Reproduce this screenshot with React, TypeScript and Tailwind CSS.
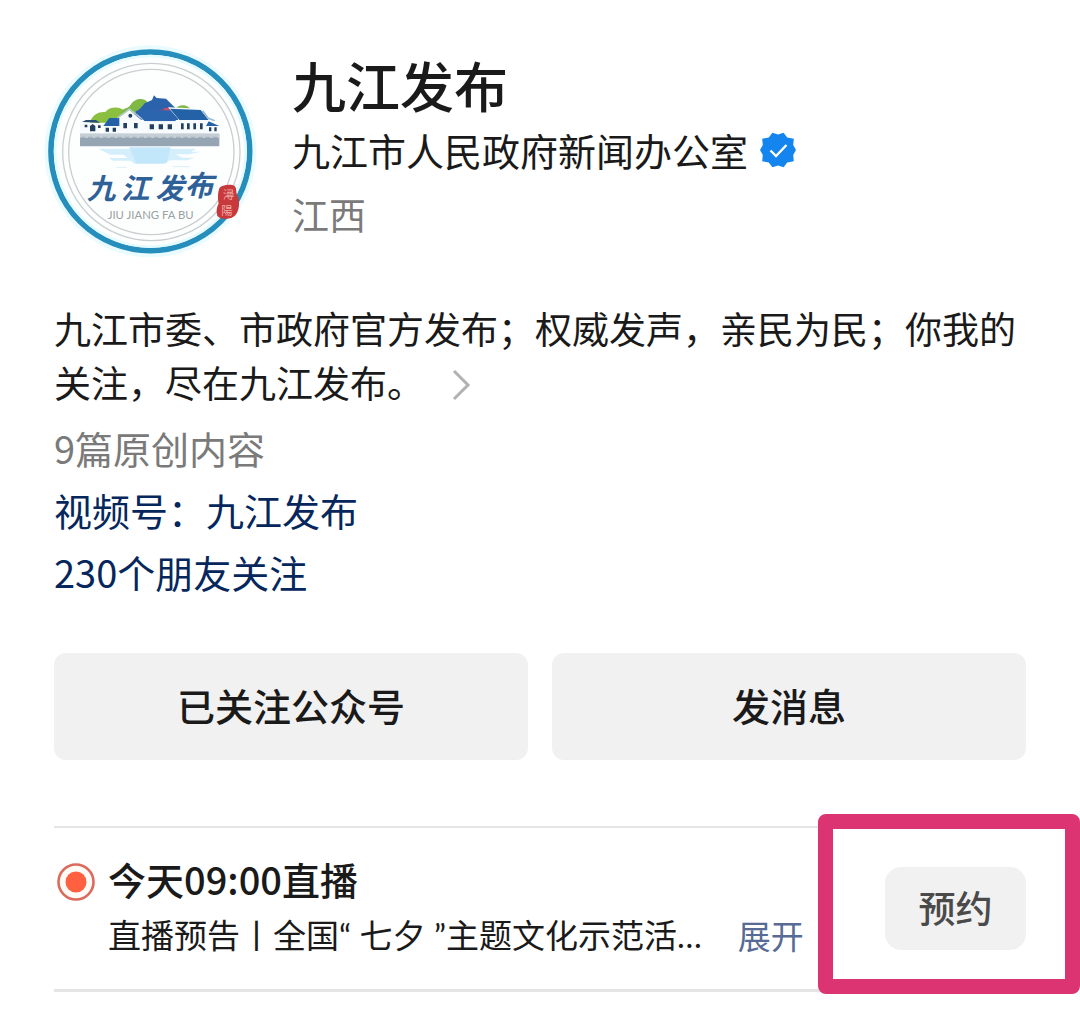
const actions = ["已关注公众号", "发消息"];

function Avatar() {
  return (
    <svg viewBox="0 0 660 660" className="size-[220px] shrink-0" role="img" aria-label="九江发布">
      <circle cx="331" cy="334" r="318" fill="#e9fbff" />
      <circle cx="331" cy="334" r="298" fill="#fdfffe" stroke="#258ebd" strokeWidth="17" />
      <circle cx="331" cy="334" r="286" fill="none" stroke="#e3faff" strokeWidth="8" />
      <circle cx="334" cy="336" r="266" fill="none" stroke="#c9cfd0" strokeWidth="4" />
      <circle cx="334" cy="336" r="248" fill="none" stroke="#c9cfd0" strokeWidth="4" />

      {/* hills */}
      <path d="M150 244c10-22 28-30 46-28 14-18 48-18 62 2l12 30H150z" fill="#8abf3f" />
      <path d="M244 212c10-8 22-8 28-18 12-22 44-22 52-6v40h-80z" fill="#7fb845" />
      <path d="M404 210c8-18 38-20 50 0z" fill="#7fb845" />

      {/* roofs and walls */}
      <path d="M262 240l40-36 12-14 22-10 6-14 8 8 28 2 22 22 14 12v30z" fill="#2a62ac" />
      <path d="M330 218l34-10 26-8-4 30-26-6z" fill="#6b5690" />
      <path d="M372 204h16v8h-14z" fill="#c2506b" />
      <path d="M120 250h60v30h-60z" fill="#f7fbfd" />
      <path d="M126 246l12-6h30l12 8z" fill="#2b4f73" />
      <path d="M190 258l18-24h36v24z" fill="#2462a8" />
      <path d="M192 258h50v26h-50z" fill="#f7fbfd" />
      <path d="M238 284v-52l30-22 36 30v44z" fill="#f7fbfd" />
      <path d="M232 234l36-27 40 31h16" fill="none" stroke="#b9cddc" strokeWidth="4" />
      <path d="M286 212l34-2 74 2 14 32H314z" fill="#2a65ae" />
      <path d="M304 244h110v40H304z" fill="#f7fbfd" />
      <path d="M384 202l30 34v48h90v-50l-20-28z" fill="#f7fbfd" />
      <path d="M390 206l92 4 24 30H418z" fill="#2462a8" />
      <path d="M488 212l16 22 20 8" fill="none" stroke="#9dbcd2" strokeWidth="5" />
      <path d="M498 258l8-14 32 14z" fill="#2462a8" />
      <path d="M502 258h32v26h-32z" fill="#f7fbfd" />
      <g fill="#23405f">
        <path d="M150 258l8-6 8 6v16h-16zM134 254h8v8h-8zM174 256h8v8h-8z" />
        <circle cx="271" cy="227" r="6" />
        <path d="M197 263h10v12h-10zM218 263h10v12h-10zM250 249h11v16h-11zM282 249h11v16h-11z" />
        <path d="M329 253h13v15h-13zM356 253h13v15h-13zM383 253h13v15h-13z" />
        <path d="M423 250h8v18h-8zM441 250h8v18h-8zM460 250h8v18h-8zM480 250h8v18h-8zM507 262h7v12h-7zM523 262h7v12h-7z" />
      </g>

      {/* embankment and water */}
      <path d="M120 281h418v38H120z" fill="#95a5b3" />
      <path d="M120 281h418v13H120z" fill="#c6ced5" />
      <path d="M122 292h414" stroke="#8d9cab" strokeWidth="2" strokeDasharray="14 8" />
      <path d="M176 326h294l-18 9h30l-34 8h-40l18 10h36l-20 8h-52l-20 11H286l-16-10h-52l-10-8h56l-14-10h-40z" fill="#d4effb" />
      <path d="M268 322h124l-12 48h-92z" fill="#c3e7fa" />
      <path d="M230 382h30M398 380h50" stroke="#dff2fa" strokeWidth="4" />

      <text y="476" fill="#2e6198" fontSize="86" fontStyle="italic" fontWeight="700" fontFamily="'Noto Sans CJK SC', sans-serif">
        <tspan x="140">九</tspan>
        <tspan x="242">江</tspan>
        <tspan x="346">发</tspan>
        <tspan x="434" y="468">布</tspan>
      </text>
      <text x="203" y="536" fill="#9aa0a4" fontSize="34" fontFamily="Lato, sans-serif">
        JIU JIANG FA BU
      </text>

      {/* seal */}
      <path d="M540 442c10-10 36-10 44-4 8 10 2 18 8 28 8 12 8 44-6 60-12 14-44 14-54 2-4-14-2-26 4-38-4-16-2-40 4-48z" fill="#c8393b" />
      <text fill="#efaca8" fontSize="34" fontFamily="'Noto Sans CJK SC', sans-serif">
        <tspan x="549" y="477">潯</tspan>
        <tspan x="544" y="525">陽</tspan>
      </text>
    </svg>
  );
}

function VerifiedBadge() {
  return (
    <svg viewBox="0 0 36 36" className="size-9 shrink-0" role="img" aria-label="已认证">
      <path
        d="M18 2.500L23.600 .7l3.600 4.800 6.600 1.300-.6 6.200L36 18l-2.800 5 .6 6.200-6.600 1.300-3.600 4.800L18 33.500l-5.600 1.800-3.600-4.800-6.600-1.300.6-6.200L0 18l2.800-5-.6-6.200 6.600-1.300L12.400 .7z"
        fill="#1485ee"
      />
      <path d="M10.500 18.500l5.500 5.500 10.500-11" fill="none" stroke="#fff" strokeWidth="2.400" />
    </svg>
  );
}

export default function App() {
  return (
    <main
      lang="zh-CN"
      className="min-h-screen bg-white font-['Noto_Sans_CJK_SC',sans-serif] text-[38px] text-[#1a1a1a]"
    >
      <header className="flex gap-8 pt-10 pl-10">
        <Avatar />
        <div className="pt-[10px]">
          <h1 className="text-[54px] leading-[70px] font-medium">九江发布</h1>
          <p className="flex items-center gap-3 leading-[60px]">
            九江市人民政府新闻办公室
            <VerifiedBadge />
          </p>
          <p className="text-[37px] leading-[68px] text-[#7a7a7a]">江西</p>
        </div>
      </header>

      <section className="px-[54px] pt-[41px]">
        <p className="text-[37px] leading-[54px]">
          九江市委、市政府官方发布；权威发声，亲民为民；你我的关注，尽在九江发布。
          <button type="button" aria-label="查看详情" className="ml-7 align-[-3px]">
            <svg viewBox="0 0 20 32" className="h-8 w-5" fill="none" stroke="#b2b2b2" strokeWidth="3">
              <path d="M2 2l14 14L2 30" />
            </svg>
          </button>
        </p>
        <div className="flex flex-col items-start pt-2 leading-[62px]">
          <p className="text-[#7a7a7a]">9篇原创内容</p>
          <a href="#channel" className="text-[#06275c]">视频号：九江发布</a>
          <a href="#friends" className="text-[#06275c]">230个朋友关注</a>
        </div>
        <div className="grid grid-cols-2 gap-6 pt-[50px]">
          {actions.map((label) => (
            <button key={label} type="button" className="h-[107px] rounded-xl bg-[#f1f1f1] pb-1 font-medium">
              {label}
            </button>
          ))}
        </div>
      </section>

      {/* Live preview */}
      <section className="relative mt-[66px] px-[54px]">
        <div className="flex items-center border-t-2 border-b-3 border-[#e5e5e5] pt-[26px] pb-[27px]">
          <div className="flex min-w-0 flex-1 gap-3">
            <svg viewBox="0 0 40 40" className="mt-2 ml-[2px] size-10 shrink-0" aria-hidden="true">
              <circle cx="20" cy="20" r="17.500" fill="#fffaf5" stroke="#dc6a5c" strokeWidth="2.600" />
              <circle cx="20" cy="20" r="10.500" fill="#ff6040" />
            </svg>
            <div className="min-w-0 flex-1">
              <h2 className="pb-1 leading-[50px] font-medium">今天09:00直播</h2>
              <div className="flex gap-9 text-[33px] leading-[54px]">
                <p className="truncate font-['Lato','Noto_Sans_CJK_SC',sans-serif]">
                  直播预告丨全国“ 七夕 ”主题文化示范活…
                </p>
                <button type="button" className="shrink-0 text-[#576b95]">展开</button>
              </div>
            </div>
          </div>
          <button
            type="button"
            className="ml-[72px] h-[83px] w-[141px] shrink-0 rounded-2xl bg-[#f1f1f1] text-[37px] font-medium text-[#4a4a4a]"
          >
            预约
          </button>
        </div>
        <div className="pointer-events-none absolute -top-3 right-0 -bottom-[2px] w-[262px] rounded-lg border-[15px] border-[#dc3372]" />
      </section>
    </main>
  );
}
